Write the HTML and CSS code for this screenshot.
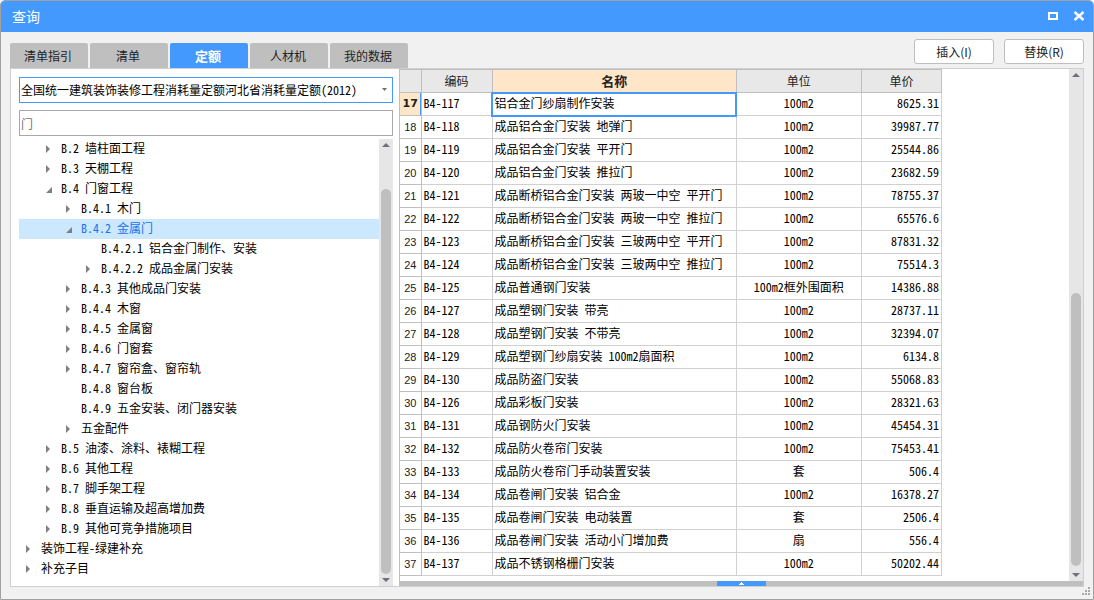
FILE: index.html
```html
<!DOCTYPE html>
<html lang="zh-CN">
<head>
<meta charset="utf-8">
<title>查询</title>
<link rel="stylesheet" href="styles.css">
</head>
<body>
<div class="window">
  <header class="titlebar">
    <h1 class="title">查询</h1>
    <button class="win-btn" type="button" aria-label="最大化"><svg width="12" height="12" viewBox="0 0 12 12"><path d="M1 2h10v8H1zM3 4v4h6V4z" fill="#fff" fill-rule="evenodd"/></svg></button>
    <button class="win-btn" type="button" aria-label="关闭"><svg width="12" height="12" viewBox="0 0 12 12"><path d="M1.500 2l9 8M10.500 2l-9 8" fill="none" stroke="#fff" stroke-width="2.400"/></svg></button>
  </header>

  <div class="toolbar">
    <nav class="tabs" role="tablist">
      <button class="tab" type="button" role="tab">清单指引</button>
      <button class="tab" type="button" role="tab">清单</button>
      <button class="tab tab-active" type="button" role="tab" aria-selected="true">定额</button>
      <button class="tab" type="button" role="tab">人材机</button>
      <button class="tab" type="button" role="tab">我的数据</button>
    </nav>
    <div class="actions">
      <button class="action" type="button">插入(I)</button>
      <button class="action" type="button">替换(R)</button>
    </div>
  </div>

  <main class="content">
    <section class="side">
      <div class="combo">
        <select class="field field-select" aria-label="定额库"><option>全国统一建筑装饰装修工程消耗量定额河北省消耗量定额(2012)</option></select>
        <svg class="combo-arrow" width="5" height="3" viewBox="0 0 5 3"><path d="M0 0h5L2.500 3z" fill="#707070"/></svg>
      </div>
      <input class="field field-search" type="text" value="门" aria-label="搜索">
      <div class="tree-area">
        <ul class="tree" role="tree">
          <li class="node lv1"><i class="shut"></i>B.2 墙柱面工程</li>
          <li class="node lv1"><i class="shut"></i>B.3 天棚工程</li>
          <li class="node lv1"><i class="open"></i>B.4 门窗工程</li>
          <li class="node lv2"><i class="shut"></i>B.4.1 木门</li>
          <li class="node lv2 selected"><i class="open"></i>B.4.2 金属门</li>
          <li class="node lv3"><i></i>B.4.2.1 铝合金门制作、安装</li>
          <li class="node lv3"><i class="shut"></i>B.4.2.2 成品金属门安装</li>
          <li class="node lv2"><i class="shut"></i>B.4.3 其他成品门安装</li>
          <li class="node lv2"><i class="shut"></i>B.4.4 木窗</li>
          <li class="node lv2"><i class="shut"></i>B.4.5 金属窗</li>
          <li class="node lv2"><i class="shut"></i>B.4.6 门窗套</li>
          <li class="node lv2"><i class="shut"></i>B.4.7 窗帘盒、窗帘轨</li>
          <li class="node lv2"><i></i>B.4.8 窗台板</li>
          <li class="node lv2"><i></i>B.4.9 五金安装、闭门器安装</li>
          <li class="node lv2"><i class="shut"></i>五金配件</li>
          <li class="node lv1"><i class="shut"></i>B.5 油漆、涂料、裱糊工程</li>
          <li class="node lv1"><i class="shut"></i>B.6 其他工程</li>
          <li class="node lv1"><i class="shut"></i>B.7 脚手架工程</li>
          <li class="node lv1"><i class="shut"></i>B.8 垂直运输及超高增加费</li>
          <li class="node lv1"><i class="shut"></i>B.9 其他可竞争措施项目</li>
          <li class="node lv0"><i class="shut"></i>装饰工程-绿建补充</li>
          <li class="node lv0"><i class="shut"></i>补充子目</li>
        </ul>
        <div class="scroll">
          <svg width="8" height="4" viewBox="0 0 8 4"><path d="M0 4h8L4 0z" fill="#707078"/></svg>
          <div class="rail"><div class="thumb thumb-tree"></div></div>
          <svg width="8" height="4" viewBox="0 0 8 4"><path d="M0 0h8L4 4z" fill="#707078"/></svg>
        </div>
      </div>
    </section>

    <section class="detail">
      <div class="grid-area">
        <div class="grid-wrap">
          <table class="grid">
            <colgroup><col class="c-no"><col class="c-code"><col class="c-name"><col class="c-unit"><col class="c-price"></colgroup>
            <thead><tr><th></th><th>编码</th><th class="current">名称</th><th>单位</th><th>单价</th></tr></thead>
            <tbody>
              <tr class="active"><th>17</th><td>B4-117</td><td class="focus">铝合金门纱扇制作安装</td><td>100m2</td><td>8625.31</td></tr>
              <tr><th>18</th><td>B4-118</td><td>成品铝合金门安装 地弹门</td><td>100m2</td><td>39987.77</td></tr>
              <tr><th>19</th><td>B4-119</td><td>成品铝合金门安装 平开门</td><td>100m2</td><td>25544.86</td></tr>
              <tr><th>20</th><td>B4-120</td><td>成品铝合金门安装 推拉门</td><td>100m2</td><td>23682.59</td></tr>
              <tr><th>21</th><td>B4-121</td><td>成品断桥铝合金门安装 两玻一中空 平开门</td><td>100m2</td><td>78755.37</td></tr>
              <tr><th>22</th><td>B4-122</td><td>成品断桥铝合金门安装 两玻一中空 推拉门</td><td>100m2</td><td>65576.6</td></tr>
              <tr><th>23</th><td>B4-123</td><td>成品断桥铝合金门安装 三玻两中空 平开门</td><td>100m2</td><td>87831.32</td></tr>
              <tr><th>24</th><td>B4-124</td><td>成品断桥铝合金门安装 三玻两中空 推拉门</td><td>100m2</td><td>75514.3</td></tr>
              <tr><th>25</th><td>B4-125</td><td>成品普通钢门安装</td><td>100m2框外围面积</td><td>14386.88</td></tr>
              <tr><th>26</th><td>B4-127</td><td>成品塑钢门安装 带亮</td><td>100m2</td><td>28737.11</td></tr>
              <tr><th>27</th><td>B4-128</td><td>成品塑钢门安装 不带亮</td><td>100m2</td><td>32394.07</td></tr>
              <tr><th>28</th><td>B4-129</td><td>成品塑钢门纱扇安装 100m2扇面积</td><td>100m2</td><td>6134.8</td></tr>
              <tr><th>29</th><td>B4-130</td><td>成品防盗门安装</td><td>100m2</td><td>55068.83</td></tr>
              <tr><th>30</th><td>B4-126</td><td>成品彩板门安装</td><td>100m2</td><td>28321.63</td></tr>
              <tr><th>31</th><td>B4-131</td><td>成品钢防火门安装</td><td>100m2</td><td>45454.31</td></tr>
              <tr><th>32</th><td>B4-132</td><td>成品防火卷帘门安装</td><td>100m2</td><td>75453.41</td></tr>
              <tr><th>33</th><td>B4-133</td><td>成品防火卷帘门手动装置安装</td><td>套</td><td>506.4</td></tr>
              <tr><th>34</th><td>B4-134</td><td>成品卷闸门安装 铝合金</td><td>100m2</td><td>16378.27</td></tr>
              <tr><th>35</th><td>B4-135</td><td>成品卷闸门安装 电动装置</td><td>套</td><td>2506.4</td></tr>
              <tr><th>36</th><td>B4-136</td><td>成品卷闸门安装 活动小门增加费</td><td>扇</td><td>556.4</td></tr>
              <tr><th>37</th><td>B4-137</td><td>成品不锈钢格栅门安装</td><td>100m2</td><td>50202.44</td></tr>
            </tbody>
          </table>
        </div>
        <div class="scroll">
          <svg width="8" height="4" viewBox="0 0 8 4"><path d="M0 4h8L4 0z" fill="#707078"/></svg>
          <div class="rail"><div class="thumb thumb-grid"></div></div>
          <svg width="8" height="4" viewBox="0 0 8 4"><path d="M0 0h8L4 4z" fill="#707078"/></svg>
        </div>
      </div>
      <div class="splitter">
        <button class="splitter-btn" type="button" aria-label="展开"><svg width="5" height="3" viewBox="0 0 5 3"><path d="M2 0h1v1h1v1h1v1H0V2h1V1h1z" fill="#fff"/></svg></button>
      </div>
    </section>
  </main>
  <svg class="grip" width="8" height="8" viewBox="0 0 8 8"><path d="M6 0h2v2H6zM3 3h2v2H3zM6 3h2v2H6zM0 6h2v2H0zM3 6h2v2H3zM6 6h2v2H6z" fill="#a8a8a8"/></svg>
</div>
</body>
</html>
```
FILE: styles.css
```css
* { box-sizing: border-box; }

body {
  margin: 0;
  background: #fff;
  color: #000;
  font: 12px/20px "Noto Sans Mono CJK SC", "Noto Sans CJK SC", sans-serif;
}

button, input, select { font: inherit; color: inherit; }
svg { display: block; }

.window {
  position: relative;
  display: flex;
  flex-direction: column;
  min-height: 100vh;
  padding-bottom: 12px;
  border: 1px solid #a0a0a0;
  border-radius: 5px 5px 0 0;
  background: #f1f1f1;
  overflow: hidden;
}

.titlebar {
  display: flex;
  align-items: center;
  gap: 14px;
  height: 31px;
  padding: 0 8px 2px 11px;
  background: #49f;
}
.title {
  flex: 1;
  margin: 0;
  color: #fff;
  font: 14px/20px "Noto Sans CJK SC", sans-serif;
}
.win-btn { padding: 0; border: 0; background: none; }

.toolbar {
  display: flex;
  justify-content: space-between;
  align-items: flex-end;
  height: 36px;
  padding: 0 9px;
}
.tabs { display: flex; gap: 2px; }
.tab {
  width: 78px;
  height: 25px;
  padding: 0 2px 0 0;
  border: 0;
  border-radius: 2px 2px 0 0;
  background: #bfbfbf;
  color: #222;
}
.tab-active { background: #49f; color: #fff; font-size: 13px; font-weight: 700; }
.actions { display: flex; gap: 10px; padding-bottom: 4px; }
.action {
  width: 80px;
  height: 25px;
  padding: 0;
  border: 1px solid #bfbfbf;
  border-radius: 3px;
  background: #fff;
  color: #222;
  font-family: "Noto Sans CJK SC", sans-serif;
}

.content {
  display: flex;
  flex: 1;
  margin: 0 9px;
  border: 1px solid #cfcfcf;
  background: #fff;
}

.side {
  display: flex;
  flex-direction: column;
  flex: 0 0 388px;
  padding: 8px 6px 0 8px;
}
.combo { position: relative; margin-bottom: 7px; }
.combo-arrow { position: absolute; right: 6px; top: 11px; }
.field {
  display: block;
  width: 100%;
  height: 26px;
  padding: 0 1px;
  border: 1px solid #a8a8a8;
  border-radius: 0;
  background: #fff;
  outline: 0;
}
.field-select { appearance: none; border-color: #49f; }
.field-search { color: #777; }

.tree-area { display: flex; flex: 1; margin-top: 3px; }
.tree { flex: 1; margin: 0; padding: 0; list-style: none; }
.node {
  display: flex;
  align-items: center;
  height: 20px;
  line-height: 18px;
  padding-bottom: 2px;
  white-space: pre;
}
.node i { display: flex; width: 15px; padding-top: 2px; }
.node i::before { content: ""; }
.shut::before {
  width: 4px;
  height: 8px;
  background: #808080;
  clip-path: polygon(0 0, 100% 50%, 0 100%);
}
.open::before {
  width: 6px;
  height: 6px;
  margin-top: 2px;
  background: #808080;
  clip-path: polygon(100% 0, 100% 100%, 0 100%);
}
.lv0 { padding-left: 7px; }
.lv1 { padding-left: 27px; }
.lv2 { padding-left: 47px; }
.lv3 { padding-left: 67px; }
.selected { background: #cce8ff; color: #1a73e8; }

.scroll {
  display: flex;
  flex-direction: column;
  align-items: center;
  width: 14px;
  padding: 4px 0;
  background: #e6e6e6;
}
.rail {
  display: flex;
  flex: 1;
  flex-direction: column;
  justify-content: flex-end;
  width: 10px;
  padding: 4px 0;
}
.thumb { border-radius: 5px; background: #bfbfbf; }
.thumb-tree { height: 91%; }
.thumb-grid { height: 56%; margin-bottom: 3px; }

.detail {
  display: flex;
  flex-direction: column;
  flex: 1;
  min-width: 0;
  border-left: 1px solid #bfbfbf;
}
.grid-area { display: flex; flex: 1; }
.grid-wrap { flex: 1; min-width: 0; overflow: hidden; }
.grid { width: 542px; border-collapse: collapse; table-layout: fixed; }
.c-no { width: 21px; }
.c-code { width: 71px; }
.c-name { width: 244px; }
.c-unit { width: 125px; }
.c-price { width: 80px; }
.grid tr { height: 23px; }
.grid th, .grid td {
  padding: 0 2px 2px;
  border: 1px solid #d0d0d0;
  line-height: 20px;
  text-align: left;
  white-space: nowrap;
}
.grid th {
  padding: 0;
  border-color: #bfbfbf;
  background: #e8e8e8;
  color: #222;
  font-weight: 400;
  text-align: center;
}
.grid thead th { border-top-color: #bfbfbf; }
.grid th:first-child { border-left: 0; }
.grid tbody th { background: #fff; font: 11px/20px "Liberation Sans", sans-serif; }
.grid thead .current { background: #ffe6c8; font-size: 13px; font-weight: 700; }
.grid .active th { background: #ffe6c8; font: 700 11px/20px "DejaVu Sans", sans-serif; box-shadow: inset -1px 0 #49f; }
.grid .focus { outline: 2px solid #49f; outline-offset: -1px; }
.grid td:nth-child(4) { text-align: center; }
.grid td:nth-child(5) { text-align: right; }

.splitter {
  display: flex;
  justify-content: center;
  height: 5px;
  background: #bfbfbf;
}
.splitter-btn {
  display: grid;
  place-items: center;
  width: 49px;
  height: 5px;
  padding: 0;
  border: 0;
  background: #49f;
}
.grip { position: absolute; right: 3px; bottom: 4px; }
```
